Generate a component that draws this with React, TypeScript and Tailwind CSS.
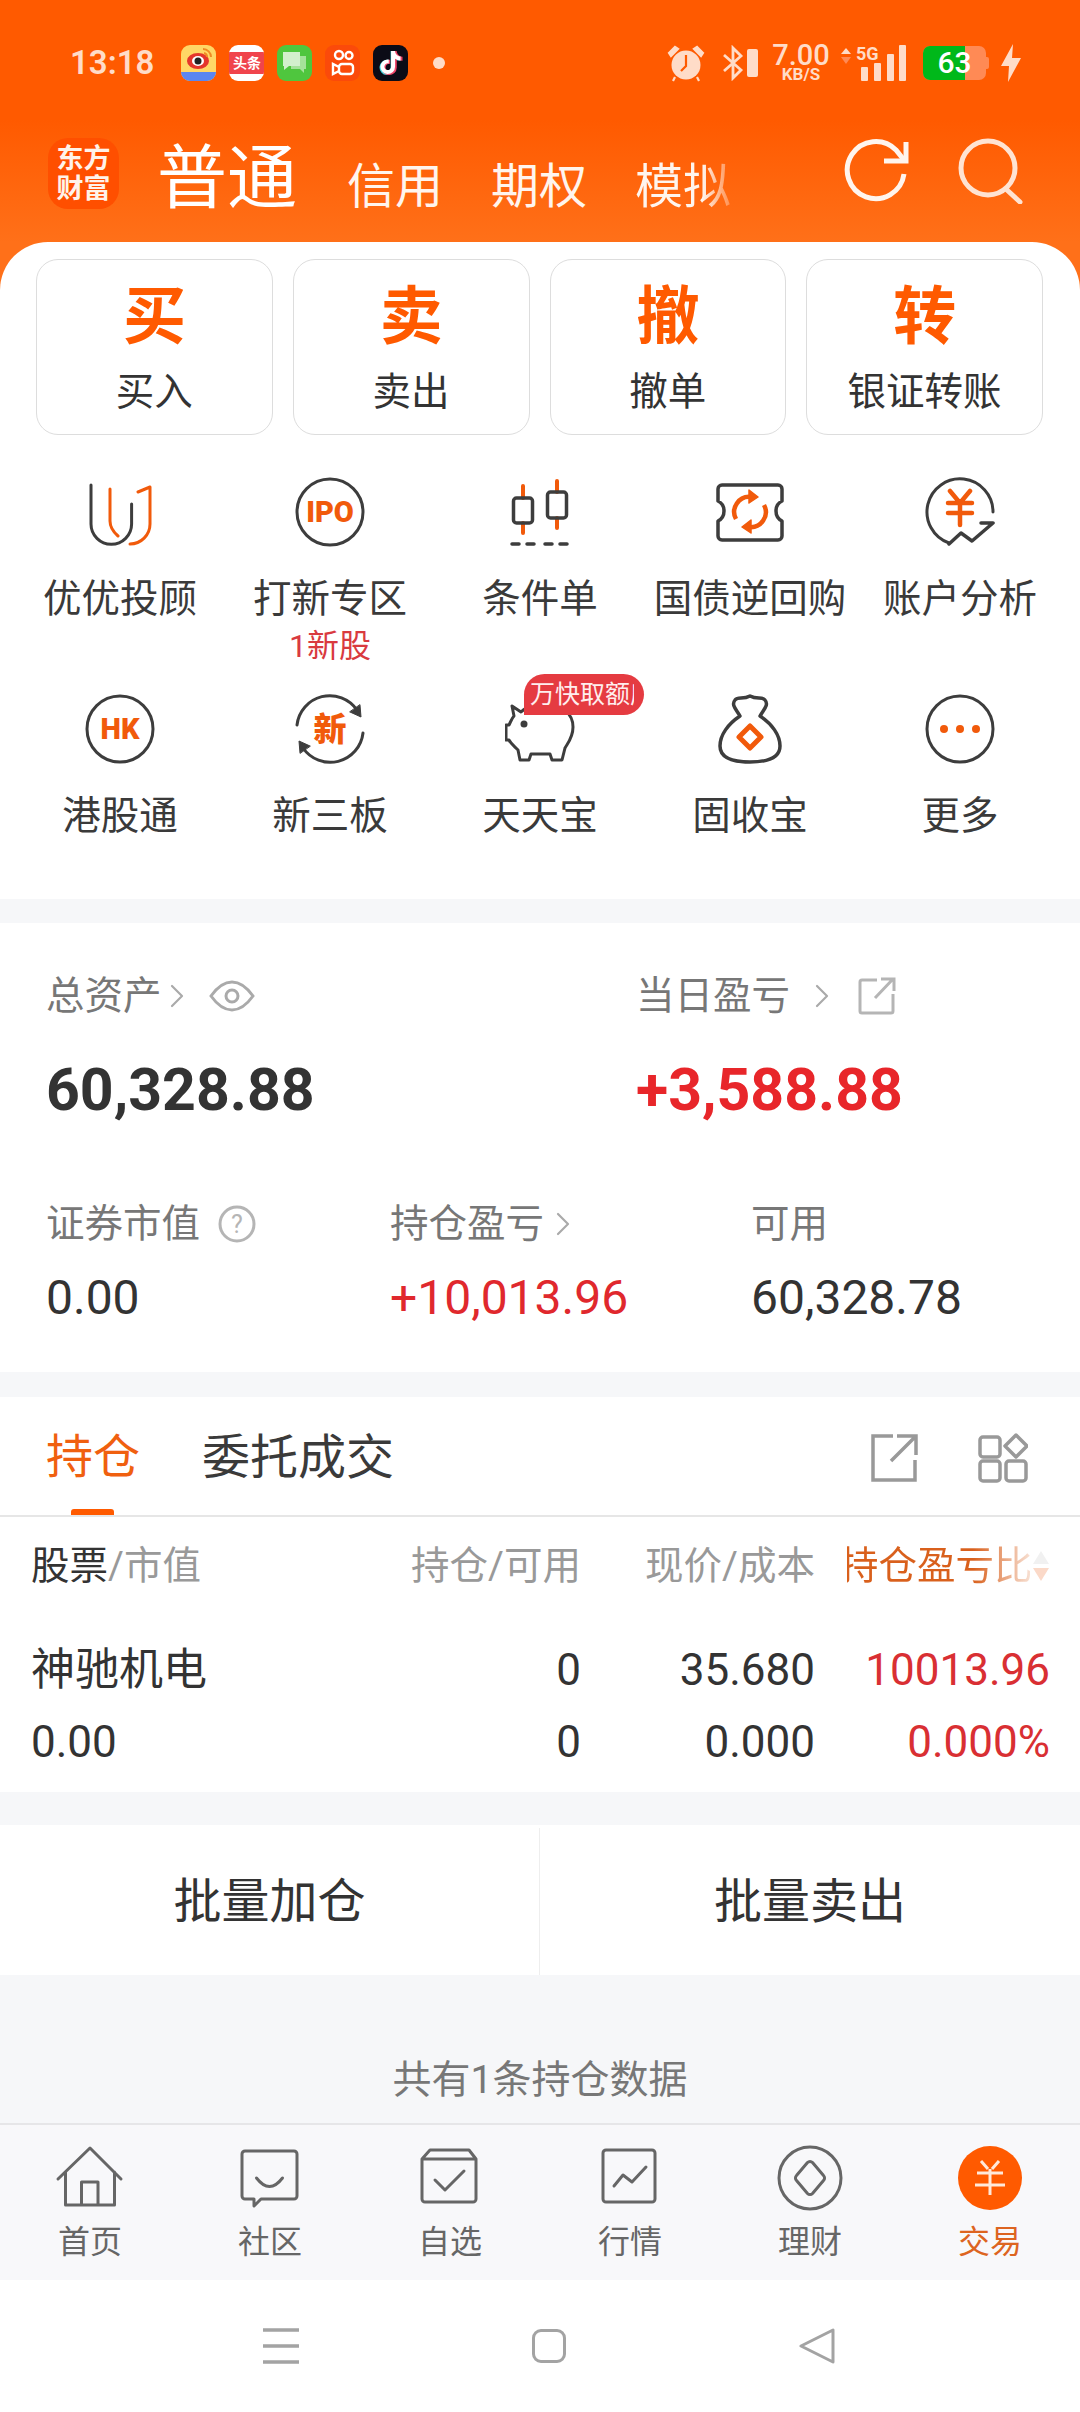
import type { ReactNode } from "react";
import { FaTiktok } from "react-icons/fa";

const ORANGE = "#f15a0b";
const DARK = "#3d3d3d";

function Ring({ children }: { children?: ReactNode }) {
  return (
    <svg width="70" height="70" viewBox="0 0 70 70" fill="none" strokeLinecap="round" strokeLinejoin="round">
      {children}
    </svg>
  );
}

const gridIcons: Record<string, ReactNode> = {
  uu: (
    <Ring>
      <path d="M6 8V47a20 20 0 0 0 40.6 0V27" stroke={DARK} strokeWidth="3" />
      <path d="M25 12V44q0 8 8 15" stroke={ORANGE} strokeWidth="3" />
      <path d="M53 15L65 10V47a20 20 0 0 1 -20 20" stroke={ORANGE} strokeWidth="3" />
    </Ring>
  ),
  ipo: (
    <Ring>
      <circle cx="35" cy="35" r="33" stroke={DARK} strokeWidth="3" />
      <text x="35" y="45" textAnchor="middle" fontSize="29" fill={ORANGE} className="font-black">IPO</text>
    </Ring>
  ),
  candle: (
    <Ring>
      <path d="M18 9V21M18 46V56M52 4V15M52 41V51" stroke={ORANGE} strokeWidth="4" />
      <rect x="8.5" y="21" width="19" height="25" rx="3" stroke={DARK} strokeWidth="3.5" />
      <rect x="42.5" y="15" width="19" height="26" rx="3" stroke={DARK} strokeWidth="3.5" />
      <path d="M7 67H14M22 67H29M40 67H47M55 67H62" stroke={DARK} strokeWidth="3.5" />
    </Ring>
  ),
  ticket: (
    <Ring>
      <path d="M7 8H63a4 4 0 0 1 4 4V24q-6 3 -6 10q0 7 6 10V59a4 4 0 0 1 -4 4H7a4 4 0 0 1 -4 -4V44q6 -3 6 -10q0 -7 -6 -10V12a4 4 0 0 1 4 -4Z" stroke={DARK} strokeWidth="3.5" />
      <path d="M21 42A15 15 0 0 1 36 20M49 28A15 15 0 0 1 34 50" stroke={ORANGE} strokeWidth="4.5" strokeLinecap="butt" />
      <path d="M34 13L43 20L34 26Z M36 43L27 50L36 56Z" fill={ORANGE} stroke={ORANGE} strokeWidth="1.5" />
    </Ring>
  ),
  analysis: (
    <Ring>
      <path d="M24 66A33 33 0 1 1 68 35" stroke={DARK} strokeWidth="3" />
      <path d="M24 67L36 56L47 64L68 46H56" stroke={DARK} strokeWidth="3.5" />
      <path d="M25 14L35 26L45 14M23 26H47M23 36H47M35 26V48" stroke={ORANGE} strokeWidth="4.5" />
    </Ring>
  ),
  hk: (
    <Ring>
      <circle cx="35" cy="35" r="33" stroke={DARK} strokeWidth="3" />
      <text x="35" y="45" textAnchor="middle" fontSize="29" fill={ORANGE} className="font-black">HK</text>
    </Ring>
  ),
  xin: (
    <Ring>
      <path d="M2 31A33 33 0 0 1 62 16M68 39A33 33 0 0 1 8 54" stroke={DARK} strokeWidth="3" />
      <path d="M55 18L66 23L65 11Z M15 52L4 47L5 59Z" fill={DARK} stroke={DARK} strokeWidth="1" />
      <text x="35" y="47" textAnchor="middle" fontSize="33" fill={ORANGE} className="font-black">新</text>
    </Ring>
  ),
  pig: (
    <Ring>
      <path d="M7 12L16 18C22 12 30 11 42 11C58 11 68 20 68 33C68 44 62 50 60 54L57 66H47L45 60H26L24 66H15L13 56C9 52 6 50 4 46H1V31H4C6 27 7 24 9 22Z" stroke={DARK} strokeWidth="3" />
      <circle cx="19" cy="30" r="3.5" fill={DARK} />
    </Ring>
  ),
  bag: (
    <Ring>
      <path d="M25 22C21 15 16 11 20 6C23 2 28 6 35 2C42 6 47 2 50 6C54 11 49 15 45 22C57 30 65 41 65 52C65 63 54 68 35 68C16 68 5 63 5 52C5 41 13 30 25 22Z" stroke={DARK} strokeWidth="3.5" />
      <path d="M35 32L46 43L35 54L24 43Z" stroke={ORANGE} strokeWidth="5" />
    </Ring>
  ),
  more: (
    <Ring>
      <circle cx="35" cy="35" r="33" stroke={DARK} strokeWidth="3" />
      <circle cx="19" cy="35" r="4" fill={ORANGE} />
      <circle cx="35" cy="35" r="4" fill={ORANGE} />
      <circle cx="51" cy="35" r="4" fill={ORANGE} />
    </Ring>
  ),
};

const NAV_GRAY = "#666666";

const navIcons: Record<string, ReactNode> = {
  home: (
    <Ring>
      <path d="M3 36L35 5L66 36M10.5 29V62H59.5V29M26.5 62V39H43V62" stroke={NAV_GRAY} strokeWidth="3" />
    </Ring>
  ),
  chat: (
    <Ring>
      <path d="M10 8H59a3 3 0 0 1 3 3V53a3 3 0 0 1 -3 3H26L19 63V56H10a3 3 0 0 1 -3 -3V11a3 3 0 0 1 3 -3Z" stroke={NAV_GRAY} strokeWidth="3" />
      <path d="M21.5 35Q34.5 52 47.5 35" stroke={NAV_GRAY} strokeWidth="3" />
    </Ring>
  ),
  box: (
    <Ring>
      <path d="M15 7H54L61 16V56a3 3 0 0 1 -3 3H10a3 3 0 0 1 -3 -3V16ZM7 16H61" stroke={NAV_GRAY} strokeWidth="3" />
      <path d="M20 37L30 47L49 28" stroke={NAV_GRAY} strokeWidth="3" />
    </Ring>
  ),
  chart: (
    <Ring>
      <rect x="8" y="7" width="52" height="52" rx="3" stroke={NAV_GRAY} strokeWidth="3" />
      <path d="M19 43L28 32L37 39L51 24" stroke={NAV_GRAY} strokeWidth="3" />
    </Ring>
  ),
  coin: (
    <Ring>
      <circle cx="35" cy="35" r="31" stroke={NAV_GRAY} strokeWidth="3" />
      <path d="M32.5 19.5a3.5 3.5 0 0 1 5 0L48.5 32.5a3.5 3.5 0 0 1 0 5L37.5 50.5a3.5 3.5 0 0 1 -5 0L21.5 37.5a3.5 3.5 0 0 1 0 -5Z" stroke={NAV_GRAY} strokeWidth="3" />
    </Ring>
  ),
  trade: (
    <Ring>
      <circle cx="35" cy="35" r="32" fill="#ff5a00" />
      <path d="M26 18L33 26M44 18L37 26M22 30H48M20 42H50M35 26V52" stroke="#ffe8da" strokeWidth="3" strokeLinecap="butt" />
    </Ring>
  ),
};

const topButtons = [
  { glyph: "买", label: "买入" },
  { glyph: "卖", label: "卖出" },
  { glyph: "撤", label: "撤单" },
  { glyph: "转", label: "银证转账" },
];

const gridItems = [
  { icon: "uu", label: "优优投顾" },
  { icon: "ipo", label: "打新专区", sub: "1新股" },
  { icon: "candle", label: "条件单" },
  { icon: "ticket", label: "国债逆回购" },
  { icon: "analysis", label: "账户分析" },
  { icon: "hk", label: "港股通" },
  { icon: "xin", label: "新三板" },
  { icon: "pig", label: "天天宝", badge: "万快取额度" },
  { icon: "bag", label: "固收宝" },
  { icon: "more", label: "更多" },
];

const navItems = [
  { icon: "home", label: "首页" },
  { icon: "chat", label: "社区" },
  { icon: "box", label: "自选" },
  { icon: "chart", label: "行情" },
  { icon: "coin", label: "理财" },
  { icon: "trade", label: "交易", active: true },
];

function Chevron({ className = "" }: { className?: string }) {
  return (
    <svg width="16" height="26" viewBox="0 0 16 26" fill="none" className={className}>
      <path d="M3 3L13 13L3 23" stroke="#aaaaaa" strokeWidth="2.2" strokeLinecap="round" strokeLinejoin="round" />
    </svg>
  );
}

function StatusApps() {
  return (
    <div className="flex items-center gap-[13px] ml-[27px]">
      <div className="w-[35px] h-[36px] rounded-[9px] overflow-hidden flex flex-col bg-[#ffd766]">
        <div className="flex-1 flex items-center justify-center">
          <svg width="28" height="24" viewBox="0 0 28 24">
            <ellipse cx="13" cy="15" rx="11" ry="8" fill="#e5352b" />
            <ellipse cx="13" cy="15" rx="6" ry="5" fill="#fff" />
            <circle cx="13" cy="15" r="3.5" fill="#222" />
            <path d="M18 3a8 8 0 0 1 8 8M19 7a4 4 0 0 1 3 4" stroke="#f08a24" strokeWidth="2" fill="none" />
          </svg>
        </div>
        <div className="h-[9px] bg-[#5b86f0]" />
      </div>
      <div className="w-[35px] h-[36px] rounded-[9px] overflow-hidden flex flex-col bg-white">
        <div className="mt-[7px] h-[22px] bg-[#f0444c] text-white text-[14px] leading-[22px] text-center font-bold whitespace-nowrap">头条</div>
      </div>
      <div className="w-[35px] h-[36px] rounded-[9px] bg-[#4fc63e] flex items-center justify-center">
        <svg width="27" height="25" viewBox="0 0 27 25">
          <path d="M10 6h15v13h-2v4l-4-4h-9Z" fill="#a5e29a" />
          <path d="M2 2h17v14H8l-5 4v-4H2Z" fill="#d3f0cd" />
        </svg>
      </div>
      <div className="w-[35px] h-[36px] rounded-[9px] bg-[#fb4a0a] flex items-center justify-center">
        <svg width="24" height="27" viewBox="0 0 24 27" fill="none" stroke="#fff" strokeWidth="2.4">
          <circle cx="8" cy="6" r="4" />
          <circle cx="18" cy="6.5" r="3.5" />
          <rect x="8" y="15" width="14" height="10" rx="3" />
          <path d="M8 18L2 15V25L8 22" />
        </svg>
      </div>
      <div className="relative w-[35px] h-[36px] rounded-[9px] bg-[#0b0b16] flex items-center justify-center">
        <FaTiktok className="absolute text-[#45d6e0] text-[24px] -translate-x-[1px]" />
        <FaTiktok className="absolute text-[#f0466a] text-[24px] translate-x-[1px]" />
        <FaTiktok className="absolute text-white text-[23px]" />
      </div>
      <div className="ml-[12px] size-[12px] rounded-full bg-[#ffdcc8]" />
    </div>
  );
}

function StatusRight() {
  return (
    <div className="flex items-center text-[#ffdcc8]">
      <svg width="38" height="38" viewBox="0 0 38 38" fill="none">
        <circle cx="19" cy="21" r="14.5" fill="#ffdcc8" />
        <path d="M19 11V22L14 27" stroke="#ff5a00" strokeWidth="2.2" />
        <path d="M2 9L8 3L11 5L4 12Z M36 9L30 3L27 5L34 12Z M8 33L6 37M30 33L32 37" fill="#ffdcc8" stroke="#ffdcc8" strokeWidth="2.2" />
      </svg>
      <svg width="22" height="36" viewBox="0 0 22 36" fill="none" className="ml-[17px]">
        <path d="M2 10L19 25L11 33V3L19 11L2 26" stroke="#ffdcc8" strokeWidth="2.8" />
      </svg>
      <div className="ml-[3px] mt-[1px] w-[11px] h-[28px] bg-[#ffdcc8] rounded-[2px]" />
      <div className="ml-[15px] w-[56px] flex flex-col items-center font-medium">
        <span className="text-[29px] leading-[24px]">7.00</span>
        <span className="text-[17px] leading-[15px] font-bold">KB/S</span>
      </div>
      <svg width="10" height="16" viewBox="0 0 10 16" className="ml-[12px] -mt-[14px]">
        <path d="M5 0L10 6H0Z" fill="#ffdcc8" />
        <path d="M5 16L10 9H0Z" fill="#ff8a55" />
      </svg>
      <div className="relative w-[50px] h-[36px] ml-[5px]">
        <span className="absolute left-0 -top-[1px] text-[18px] leading-[20px] font-bold">5G</span>
        <svg width="50" height="36" viewBox="0 0 50 36" fill="#ffdcc8">
          <rect x="5" y="22" width="7" height="14" rx="1" />
          <rect x="18" y="18" width="7" height="18" rx="1" />
          <rect x="31" y="9" width="7" height="27" rx="1" />
          <rect x="43" y="0" width="7" height="36" rx="1" />
        </svg>
      </div>
      <div className="ml-[17px] flex items-center">
        <div className="relative w-[63px] h-[34px] rounded-[7px] overflow-hidden bg-[#ff8a55] flex">
          <div className="w-[42px] bg-[#00b81a]" />
          <span className="absolute inset-0 text-center text-white text-[30px] leading-[34px] font-medium">63</span>
        </div>
        <div className="w-[3px] h-[12px] bg-[#ff8a55] rounded-r-[2px]" />
      </div>
      <svg width="20" height="38" viewBox="0 0 20 38" className="ml-[12px]">
        <path d="M12 0L0 22H8L7 38L20 14H11Z" fill="#ffdcc8" />
      </svg>
    </div>
  );
}

function Header() {
  return (
    <div className="h-[242px] flex flex-col">
      <div className="h-[125px] pt-[44px] pl-[70px] pr-[59px] flex items-start justify-between">
        <div className="flex items-center h-[37px]">
          <span className="text-[33px] leading-[37px] font-semibold text-[#ffdcc8]">13:18</span>
          <StatusApps />
        </div>
        <div className="h-[37px] flex items-center">
          <StatusRight />
        </div>
      </div>
      <div className="flex items-start pl-[48px] pt-[13px]">
        <div className="w-[71px] h-[71px] rounded-[20px] bg-[#ff4f00] flex flex-col items-center justify-center text-[#fff3ea] text-[27px] leading-[30px] font-bold">
          <span>东方</span>
          <span>财富</span>
        </div>
        <span className="ml-[38px] mt-[1px] text-[70px] leading-[80px] text-white">普通</span>
        <div className="ml-[50px] mt-[18px] flex gap-[48px] text-[48px] leading-[62px] text-[#fff5ee]">
          <span>信用</span>
          <span>期权</span>
          <span className="bg-[linear-gradient(90deg,#fff5ee_70%,rgba(255,255,255,0.25)_100%)] bg-clip-text text-transparent">模拟</span>
        </div>
        <div className="ml-auto mr-[57px] flex items-center gap-[47px] -mt-[2px]">
          <svg width="66" height="70" viewBox="0 0 66 70" fill="none" stroke="#fff5ee" strokeWidth="5">
            <path d="M60 38A28.5 28.5 0 1 1 52 14L60 24" />
            <path d="M62 6V25H40" />
          </svg>
          <svg width="66" height="66" viewBox="0 0 66 66" fill="none" stroke="#ffe3d2" strokeWidth="5" strokeLinecap="round">
            <circle cx="31" cy="30" r="27" />
            <path d="M50 52L63 64" />
          </svg>
        </div>
      </div>
    </div>
  );
}

function TopButtons() {
  return (
    <div className="grid grid-cols-4 gap-[20px] pl-[36px] pr-[37px] pt-[17px]">
      {topButtons.map((b) => (
        <div key={b.label} className="h-[176px] rounded-[22px] border-[1.5px] border-[#dddddd] flex flex-col items-center pt-[21px]">
          <span className="text-[63px] leading-[72px] font-bold text-[#ff5a00]">{b.glyph}</span>
          <span className="mt-[14px] text-[38.5px] leading-[50px] text-[#333333] whitespace-nowrap">{b.label}</span>
        </div>
      ))}
    </div>
  );
}

function ToolGrid() {
  return (
    <div className="grid grid-cols-5 grid-rows-[217px_205px] px-[15px] pt-[42px]">
      {gridItems.map((item) => (
        <div key={item.label} className="relative flex flex-col items-center">
          {gridIcons[item.icon]}
          <span className="mt-[27px] text-[38.5px] leading-[50px] text-[#3a3a3a] whitespace-nowrap">{item.label}</span>
          {item.sub && <span className="mt-[4px] text-[32px] leading-[36px] text-[#d93a3f]">{item.sub}</span>}
          {item.badge && (
            <div className="absolute left-[89px] -top-[20px] w-[120px] h-[41px] pl-[6px] rounded-t-[21px] rounded-br-[21px] bg-[#e53b41] flex items-center">
              <span className="block w-[104px] overflow-hidden whitespace-nowrap text-[25px] leading-[41px] text-[#ffeeee]">{item.badge}</span>
            </div>
          )}
        </div>
      ))}
    </div>
  );
}

function Assets() {
  return (
    <section className="bg-white px-[46px] pt-[48px] pb-[44px]">
      <div className="grid grid-cols-[590px_1fr]">
        <div>
          <div className="flex items-center h-[50px] text-[38.5px] text-[#777777]">
            <span>总资产</span>
            <Chevron className="ml-[7px]" />
            <svg width="46" height="32" viewBox="0 0 46 32" fill="none" stroke="#aaaaaa" strokeWidth="3" className="ml-[24px]">
              <path d="M2 16Q12 2 23 2Q34 2 44 16Q34 30 23 30Q12 30 2 16Z" />
              <circle cx="23" cy="16" r="6" />
            </svg>
          </div>
          <div className="mt-[34px] text-[59px] leading-[70px] font-bold text-[#333333]">60,328.88</div>
        </div>
        <div>
          <div className="flex items-center h-[50px] text-[38.5px] text-[#777777]">
            <span>当日盈亏</span>
            <Chevron className="ml-[24px]" />
            <svg width="40" height="40" viewBox="0 0 40 40" fill="none" stroke="#b5b5b5" strokeWidth="3" className="ml-[27px]">
              <path d="M20 4H5a2 2 0 0 0 -2 2V35a2 2 0 0 0 2 2H34a2 2 0 0 0 2 -2V18" />
              <path d="M18 22L36 3M24 3H37V15" />
            </svg>
          </div>
          <div className="mt-[34px] text-[59px] leading-[70px] font-bold text-[#e8262a]">+3,588.88</div>
        </div>
      </div>
      <div className="mt-[74px] grid grid-cols-[344px_361px_1fr]">
        <div>
          <div className="flex items-center h-[50px] text-[38.5px] text-[#777777]">
            <span>证券市值</span>
            <svg width="38" height="38" viewBox="0 0 38 38" fill="none" className="ml-[18px]">
              <circle cx="19" cy="19" r="17" stroke="#b5b5b5" strokeWidth="3" />
              <text x="19" y="28" textAnchor="middle" fontSize="25" fill="#b5b5b5">?</text>
            </svg>
          </div>
          <div className="mt-[19px] text-[48px] leading-[60px] text-[#333333]">0.00</div>
        </div>
        <div>
          <div className="flex items-center h-[50px] text-[38.5px] text-[#777777]">
            <span>持仓盈亏</span>
            <Chevron className="ml-[11px]" />
          </div>
          <div className="mt-[19px] text-[48px] leading-[60px] text-[#e0282d]">+10,013.96</div>
        </div>
        <div>
          <div className="h-[50px] text-[38.5px] leading-[50px] text-[#777777]">可用</div>
          <div className="mt-[19px] text-[48px] leading-[60px] text-[#333333]">60,328.78</div>
        </div>
      </div>
    </section>
  );
}

function Positions() {
  return (
    <section className="bg-white">
      <div className="relative h-[120px] flex items-center pl-[46px] pr-[52px] pt-[3px] border-b-[2px] border-[#e6e6e6]">
        <span className="text-[47px] text-[#f0600f]">持仓</span>
        <span className="ml-[62px] text-[48px] text-[#3a3a3a]">委托成交</span>
        <div className="absolute left-[71px] bottom-0 w-[43px] h-[6px] rounded-t-[3px] bg-[#ff5a00]" />
        <div className="ml-auto flex items-center gap-[60px]">
          <svg width="48" height="48" viewBox="0 0 48 48" fill="none" stroke="#999999" strokeWidth="3.5">
            <path d="M23 2H3V46H45V26" />
            <path d="M21 27L45 3M27 2H46V21" />
          </svg>
          <svg width="50" height="50" viewBox="0 0 50 50" fill="none" stroke="#999999" strokeWidth="3.5" strokeLinejoin="round">
            <rect x="2" y="4" width="20" height="20" rx="3" />
            <rect x="2" y="28" width="20" height="20" rx="3" />
            <rect x="28" y="28" width="20" height="20" rx="3" />
            <path d="M38 2L49 13L38 24L27 13Z" />
          </svg>
        </div>
      </div>
      <div className="grid grid-cols-[300px_250px_234px_235px] pl-[31px] pt-[24px] h-[275px] content-start">
        <div className="text-[38.5px] leading-[50px] text-[#333333]">股票<span className="text-[#999999]">/市值</span></div>
        <div className="text-[38.5px] leading-[50px] text-right text-[#999999]">持仓/可用</div>
        <div className="text-[38.5px] leading-[50px] text-right text-[#999999]">现价/成本</div>
        <div className="flex justify-end items-center">
          <span className="block w-[183px] overflow-hidden whitespace-nowrap text-[38.5px] leading-[50px]">
            <span className="block -ml-[7px] bg-[linear-gradient(90deg,#d9601c_70%,rgba(217,96,28,0.2)_100%)] bg-clip-text text-transparent">持仓盈亏比</span>
          </span>
          <svg width="16" height="34" viewBox="0 0 16 34" className="ml-[3px] mr-[1px]">
            <path d="M8 2L16 15H0Z" fill="#f1f1f1" />
            <path d="M8 32L16 19H0Z" fill="#fbd9c8" />
          </svg>
        </div>
        <div className="mt-[50px] text-[44px] leading-[58px] text-[#333333]">神驰机电</div>
        <div className="mt-[50px] text-[44px] leading-[58px] text-right text-[#333333]">0</div>
        <div className="mt-[50px] text-[44px] leading-[58px] text-right text-[#333333]">35.680</div>
        <div className="mt-[50px] text-[44px] leading-[58px] text-right text-[#d92f33]">10013.96</div>
        <div className="mt-[14px] text-[44px] leading-[58px] text-[#333333]">0.00</div>
        <div className="mt-[14px] text-[44px] leading-[58px] text-right text-[#333333]">0</div>
        <div className="mt-[14px] text-[44px] leading-[58px] text-right text-[#333333]">0.000</div>
        <div className="mt-[14px] text-[44px] leading-[58px] text-right text-[#d92f33]">0.000%</div>
      </div>
    </section>
  );
}

export default function App() {
  return (
    <div className="w-[1080px] h-[2412px] overflow-hidden flex flex-col font-[Roboto,'Noto_Sans_CJK_SC',sans-serif] bg-[#f6f7f9] bg-no-repeat bg-[length:100%_300px] bg-[linear-gradient(180deg,#ff5a00_0,#ff5a00_120px,#ff7019_242px,#ff7019_300px)]">
      <Header />
      <div className="h-[657px] bg-white rounded-t-[48px]">
        <TopButtons />
        <ToolGrid />
      </div>
      <div className="mt-[24px]">
        <Assets />
      </div>
      <div className="mt-[25px]">
        <Positions />
      </div>
      <div className="mt-[33px] h-[150px] pt-[3px] bg-white grid grid-cols-2 divide-x divide-[#eeeeee] text-[48px] text-[#333333]">
        <div className="flex items-center justify-center">批量加仓</div>
        <div className="flex items-center justify-center">批量卖出</div>
      </div>
      <div className="flex-1 pt-[80px] text-center text-[39px] leading-[50px] text-[#777777]">共有1条持仓数据</div>
      <nav className="h-[157px] bg-[#f8f8fa] border-t-[2px] border-[#e6e6e8] grid grid-cols-6">
        {navItems.map((n) => (
          <div key={n.label} className="flex flex-col items-center pt-[18px]">
            {navIcons[n.icon]}
            <span className={`mt-[9px] text-[32px] leading-[40px] ${n.active ? "text-[#dd6420]" : "text-[#666666]"}`}>{n.label}</span>
          </div>
        ))}
      </nav>
      <div className="h-[132px] bg-white flex items-center gap-[233px] pl-[263px]">
        <svg width="36" height="36" viewBox="0 0 36 36" stroke="#a3a3a3" strokeWidth="3.5">
          <path d="M0 2H36M0 18H36M0 34H36" />
        </svg>
        <div className="size-[34px] rounded-[9px] border-[3px] border-[#a3a3a3]" />
        <svg width="36" height="36" viewBox="0 0 36 36" fill="none" stroke="#a3a3a3" strokeWidth="3" strokeLinejoin="round">
          <path d="M2 18L34 2V34Z" />
        </svg>
      </div>
    </div>
  );
}
